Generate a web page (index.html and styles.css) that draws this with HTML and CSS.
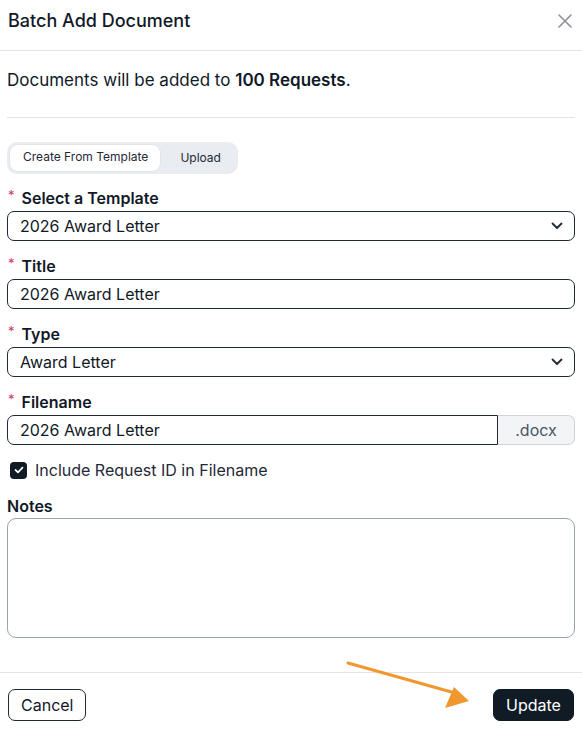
FILE: index.html
```html
<!DOCTYPE html>
<html>
<head>
<meta charset="utf-8">
<link rel="stylesheet" href="styles.css">
</head>
<body>
<div class="modal">
  <header class="head">
    <h1 class="title">Batch Add Document</h1>
    <svg class="close" width="14" height="14" viewBox="0 0 14 14"><path d="M1 1L13 13M13 1L1 13" stroke="#8a9199" stroke-width="1.6" fill="none" stroke-linecap="round"/></svg>
  </header>
  <div class="body">
    <p class="intro">Documents will be added to <b>100 Requests</b>.</p>
    <hr class="rule">
    <div class="seg">
      <span class="seg-item active">Create From Template</span>
      <span class="seg-item">Upload</span>
    </div>
    <div class="field">
      <label class="label"><span class="req">*</span>Select a Template</label>
      <div class="control select"><span>2026 Award Letter</span><svg class="chev" width="12" height="8" viewBox="0 0 12 8"><path d="M1.5 1.5L6 6L10.5 1.5" stroke="#1f2937" stroke-width="1.8" fill="none" stroke-linecap="round" stroke-linejoin="round"/></svg></div>
    </div>
    <div class="field">
      <label class="label"><span class="req">*</span>Title</label>
      <div class="control"><span>2026 Award Letter</span></div>
    </div>
    <div class="field">
      <label class="label"><span class="req">*</span>Type</label>
      <div class="control select"><span>Award Letter</span><svg class="chev" width="12" height="8" viewBox="0 0 12 8"><path d="M1.5 1.5L6 6L10.5 1.5" stroke="#1f2937" stroke-width="1.8" fill="none" stroke-linecap="round" stroke-linejoin="round"/></svg></div>
    </div>
    <div class="field">
      <label class="label"><span class="req">*</span>Filename</label>
      <div class="group">
        <div class="control grow"><span>2026 Award Letter</span></div>
        <div class="addon">.docx</div>
      </div>
    </div>
    <div class="check">
      <span class="box"><svg width="10" height="8" viewBox="0 0 10 8"><path d="M1.5 4L4 6.3L8.5 1.7" stroke="#fff" stroke-width="1.7" fill="none" stroke-linecap="round" stroke-linejoin="round"/></svg></span>
      <span>Include Request ID in Filename</span>
    </div>
    <div class="field notes">
      <label class="label">Notes</label>
      <div class="textarea"></div>
    </div>
  </div>
  <footer class="foot">
    <button class="btn">Cancel</button>
    <button class="btn primary">Update</button>
  </footer>
  <svg class="arrow" width="160" height="60" viewBox="0 0 160 60"><path d="M18 13L125 43" stroke="#f0982f" stroke-width="3" stroke-linecap="round"/><path d="M139 51L115 58L124 37Z" fill="#f0982f"/></svg>
</div>
</body>
</html>
```
FILE: styles.css
```css
* { box-sizing: border-box; }
html, body { margin: 0; padding: 0; background: #fff; }
body { font-family: Inter, "Noto Sans", sans-serif; color: #111827; }
.modal { position: relative; width: 582px; height: 732px; }
.head { height: 51px; display: flex; justify-content: space-between; align-items: flex-start; padding: 9px 10px 0 8px; border-bottom: 1px solid #e2e4e7; }
.title { margin: 0; font-size: 18px; line-height: 24px; font-weight: 500; color: #111827; }
.close { margin-top: 5px; }
.body { padding: 0 7px; }
.intro { margin: 17px 0 0; font-size: 17px; line-height: 24px; height: 24px; }
.intro b { font-weight: 600; }
.rule { border: 0; border-top: 1px solid #e2e4e7; margin: 25px 0 0; height: 0; }
.seg { margin-top: 24px; display: inline-flex; align-items: center; height: 32px; width: 231px; padding: 0 3px; background: #e9edf1; border-radius: 10px; gap: 8px; }
.seg-item { font-size: 12px; line-height: 16px; padding: 4px 12px; color: #1f2937; }
.seg-item.active { background: #fff; border-radius: 8px; padding: 4px 12px 4px 13px; height: 26px; box-shadow: 0 0 0 1px #e1e5ea; }
.field { margin-top: 14px; display: flex; flex-direction: column; gap: 3px; }
.field + .field { margin-top: 15px; }
.label { display: flex; align-items: center; font-size: 16px; line-height: 20px; font-weight: 600; color: #111827; }
.req { color: #d0366a; font-weight: 400; font-size: 13px; margin: 0 7px 0 1px; position: relative; top: -3px; }
.control { height: 30px; border: 1px solid #1f2937; border-radius: 7px; display: flex; align-items: center; justify-content: space-between; padding: 0 11px 0 12px; font-size: 16px; color: #111827; }
.chev { display: block; }
.group { display: flex; }
.group .grow { flex: 1; border-radius: 7px 0 0 7px; }
.addon { width: 77px; height: 30px; border: 1px solid #cfd4da; border-left: 0; border-radius: 0 7px 7px 0; background: #f2f4f6; display: flex; align-items: center; justify-content: center; font-size: 16px; color: #4b5563; }
.check { margin-top: 15px; height: 20px; display: flex; align-items: center; gap: 8px; font-size: 16px; color: #1f2937; padding-left: 3px; }
.box { width: 17px; height: 17px; border-radius: 4px; background: #111b26; display: flex; align-items: center; justify-content: center; }
.field.notes { margin-top: 16px; gap: 2px; }
.textarea { height: 120px; border: 1px solid #9aa4af; border-radius: 9px; }
.foot { position: absolute; left: 0; right: 0; top: 672px; border-top: 1px solid #e2e4e7; padding: 16px 8px 0; display: flex; justify-content: space-between; }
.btn { font-family: Inter, "Noto Sans", sans-serif; font-size: 16px; height: 32px; padding: 0 12px; border-radius: 7px; border: 1px solid #1f2937; background: #fff; color: #111827; }
.btn.primary { background: #101b26; color: #fff; border-color: #101b26; width: 81px; }
.arrow { position: absolute; left: 330px; top: 650px; }
```
